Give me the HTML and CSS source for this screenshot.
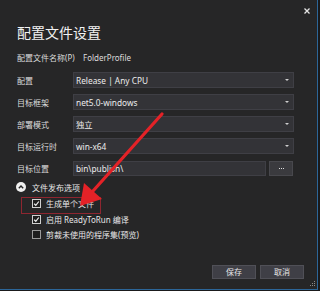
FILE: index.html
```html
<!DOCTYPE html>
<html>
<head>
<meta charset="utf-8">
<link rel="stylesheet" href="styles.css">
</head>
<body>
<div class="dialog">
  <div class="topbar">
    <svg class="close" width="6" height="6" viewBox="0 0 6 6"><path d="M0.5 0.5L5.5 5.5M5.5 0.5L0.5 5.5" stroke="#e6e6e6" stroke-width="1.3"/></svg>
  </div>
  <div class="title">配置文件设置</div>
  <div class="profile"><span class="plabel">配置文件名称(P)</span><span>FolderProfile</span></div>
  <div class="form">
    <div class="label">配置</div>
    <div class="select"><span>Release | Any CPU</span><i class="caret"></i></div>
    <div class="label">目标框架</div>
    <div class="select"><span>net5.0-windows</span><i class="caret"></i></div>
    <div class="label">部署模式</div>
    <div class="select"><span>独立</span><i class="caret"></i></div>
    <div class="label">目标运行时</div>
    <div class="select"><span>win-x64</span><i class="caret"></i></div>
    <div class="label">目标位置</div>
    <div class="pathrow">
      <div class="input">bin\publish\</div>
      <div class="browse"><i class="dot"></i><i class="dot"></i><i class="dot"></i></div>
    </div>
  </div>
  <div class="section">
    <span class="toggle"><svg width="6" height="4" viewBox="0 0 6 4"><path d="M0.8 3.3L3 1.1L5.2 3.3" fill="none" stroke="#252526" stroke-width="1.4"/></svg></span>
    <span>文件发布选项</span>
  </div>
  <div class="checks">
    <div class="check"><span class="box on"><svg width="7" height="7" viewBox="0 0 7 7"><path d="M1.2 3.8L2.8 5.3L5.8 1.5" fill="none" stroke="#f0f0f0" stroke-width="1.2"/></svg></span><span>生成单个文件</span></div>
    <div class="check"><span class="box on"><svg width="7" height="7" viewBox="0 0 7 7"><path d="M1.2 3.8L2.8 5.3L5.8 1.5" fill="none" stroke="#f0f0f0" stroke-width="1.2"/></svg></span><span>启用 ReadyToRun 编译</span></div>
    <div class="check"><span class="box"></span><span>剪裁未使用的程序集(预览)</span></div>
  </div>
  <div class="buttons">
    <div class="btn">保存</div>
    <div class="btn">取消</div>
  </div>
  <svg class="grip" width="7" height="7" viewBox="0 0 7 7">
    <rect x="5" y="0" width="1" height="1" fill="#8a8a8a"/>
    <rect x="3" y="2" width="1" height="1" fill="#8a8a8a"/><rect x="5" y="2" width="1" height="1" fill="#8a8a8a"/>
    <rect x="1" y="4" width="1" height="1" fill="#8a8a8a"/><rect x="3" y="4" width="1" height="1" fill="#8a8a8a"/><rect x="5" y="4" width="1" height="1" fill="#8a8a8a"/>
  </svg>
</div>
<div class="redbox"></div>
<svg class="arrow" width="320" height="291" viewBox="0 0 320 291">
  <line x1="162" y1="114" x2="93" y2="191" stroke="#e42227" stroke-width="3.2" stroke-linecap="round"/>
  <polygon points="80,206 84,183 102,199" fill="#e42227"/>
</svg>
</body>
</html>
```
FILE: styles.css
```css
html, body {
  margin: 0;
  padding: 0;
  background: #1a1a1b;
  width: 320px;
  height: 291px;
  overflow: hidden;
}
body {
  font-family: "Noto Sans", "Noto Sans CJK SC", sans-serif;
  color: #e8e8e8;
  position: relative;
}
.dialog {
  box-sizing: border-box;
  width: 318px;
  height: 290px;
  background: #262627;
  border-right: 1px solid #2c6699;
  border-bottom: 1px solid #2c6699;
  padding: 0 0 0 17px;
  position: relative;
}
.topbar {
  height: 20px;
  display: flex;
  justify-content: flex-end;
  align-items: flex-start;
  padding-right: 7px;
}
.close { margin-top: 8px; }
.title {
  margin-top: 4px;
  font-size: 14px;
  line-height: 16px;
  color: #f2f2f2;
  font-family: "Noto Sans CJK SC", sans-serif;
}
.profile {
  margin-top: 12px;
  font-size: 8px;
  line-height: 12px;
  display: flex;
  color: #dcdcdc;
}
.plabel { width: 66px; }
.form {
  margin-top: 8px;
  display: grid;
  grid-template-columns: 56px 221px;
  grid-auto-rows: 16px;
  row-gap: 6px;
  font-size: 8px;
}
.label {
  display: flex;
  align-items: center;
  color: #dcdcdc;
}
.select, .input {
  box-sizing: border-box;
  background: #333337;
  border: 1px solid #3f3f45;
  display: flex;
  align-items: center;
  padding-left: 2px;
  color: #ececec;
  font-size: 8.3px;
}
.select { justify-content: space-between; padding-right: 4px; }
.caret {
  width: 0; height: 0;
  border-left: 2px solid transparent;
  border-right: 2px solid transparent;
  border-top: 2px solid #cfcfcf;
}
.pathrow {
  display: flex;
  gap: 3px;
  margin-top: 1px;
  height: 15px;
}
.input { width: 193px; }
.browse {
  box-sizing: border-box;
  width: 24px;
  background: #3a3a3e;
  border: 1px solid #48484d;
  display: flex;
  align-items: center;
  justify-content: center;
  gap: 1px;
}
.dot {
  width: 1px;
  height: 1px;
  background: #e0e0e0;
}
.section {
  margin-top: 5px;
  height: 12px;
  display: flex;
  align-items: center;
  gap: 6px;
  font-size: 8px;
  margin-left: -1px;
}
.toggle {
  width: 10px; height: 10px;
  border-radius: 50%;
  background: #f0f0f0;
  display: flex;
  align-items: center;
  justify-content: center;
}
.checks {
  margin-top: 3px;
  margin-left: 15px;
  display: flex;
  flex-direction: column;
  font-size: 8px;
}
.check {
  height: 15.5px;
  display: flex;
  align-items: center;
  gap: 5px;
}
.box {
  box-sizing: border-box;
  width: 9px; height: 9px;
  border: 1px solid #9a9a9a;
  background: #1e1e1e;
  display: flex;
  align-items: center;
  justify-content: center;
}
.box.on { border-color: #d0d0d0; }
.buttons {
  margin-top: 22px;
  display: flex;
  justify-content: flex-end;
  gap: 4px;
  padding-right: 13px;
}
.btn {
  box-sizing: border-box;
  width: 44px;
  height: 14px;
  background: #3f3f46;
  border: 1px solid #505057;
  font-size: 8px;
  display: flex;
  align-items: center;
  justify-content: center;
  color: #e6e6e6;
}
.grip {
  position: absolute;
  right: 1px;
  bottom: 1px;
}
.redbox {
  position: absolute;
  left: 21px;
  top: 197px;
  width: 78px;
  height: 15px;
  border: 1px solid #8e2630;
}
.arrow {
  position: absolute;
  left: 0;
  top: 0;
}
```
